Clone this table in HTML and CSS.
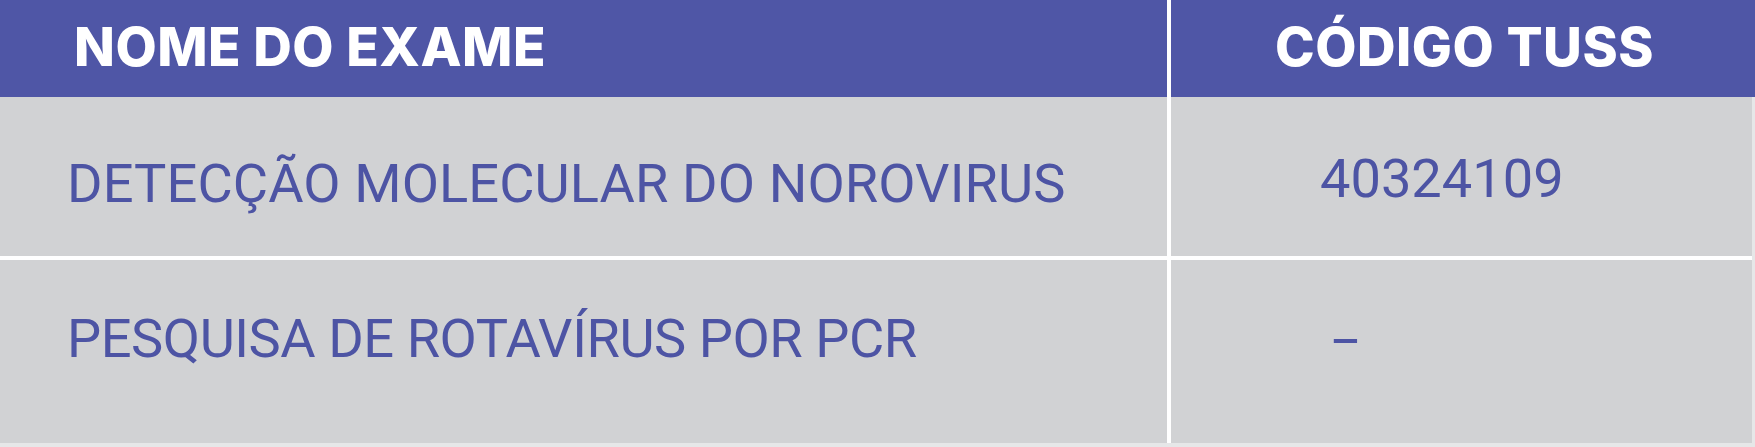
FILE: index.html
```html
<!DOCTYPE html>
<html lang="pt-BR">
<head>
<meta charset="utf-8">
<title>Exames</title>
<link rel="stylesheet" href="styles.css">
</head>
<body>
<div class="table">
  <div class="head">
    <div class="hcell hname">NOME DO EXAME</div>
    <div class="hcell hcode">CÓDIGO TUSS</div>
  </div>
  <div class="rows">
    <div class="cell name r1">DETECÇÃO MOLECULAR DO NOROVIRUS</div>
    <div class="cell code r1c">40324109</div>
    <div class="cell name r2">PESQUISA DE ROTAVÍRUS POR PCR</div>
    <div class="cell code r2c"><span class="dash">-</span></div>
  </div>
</div>
</body>
</html>
```
FILE: styles.css
```css
html, body {
  margin: 0;
  padding: 0;
  background: #e6e7e8;
}
.table {
  width: 1755px;
  height: 447px;
}
.head {
  display: grid;
  grid-template-columns: 1167px 1fr;
  column-gap: 4px;
  background: #ffffff;
  height: 97px;
}
.hcell {
  background: #4f56a6;
  color: #ffffff;
  font-family: "Inter", "Noto Sans", sans-serif;
  font-weight: 800;
  font-size: 53.4px;
  letter-spacing: 0.5px;
  line-height: 93px;
  height: 97px;
  box-sizing: border-box;
  white-space: nowrap;
}
.hname {
  padding-left: 74px;
}
.hcode {
  text-align: center;
  padding-left: 3px;
}
.rows {
  display: grid;
  grid-template-columns: 1167px 581px;
  grid-template-rows: 159px 183px;
  gap: 4px;
  width: 1752px;
  background: #ffffff;
}
.cell {
  background: #d1d2d4;
  color: #4d54a4;
  font-family: "Roboto", "Liberation Sans", sans-serif;
  font-weight: 400;
  font-size: 54.2px;
  line-height: 64px;
  white-space: nowrap;
  box-sizing: border-box;
}
.name {
  padding-left: 67px;
}
.code {
  padding-left: 149px;
}
.r1 { padding-top: 55px; letter-spacing: 0.1px; }
.r1c { padding-top: 50px; }
.r2 { padding-top: 47px; letter-spacing: -0.45px; }
.r2c { padding-top: 47px; }
.dash {
  display: inline-block;
  margin-left: 12px;
  transform: scaleX(1.8);
  transform-origin: left center;
}
```
